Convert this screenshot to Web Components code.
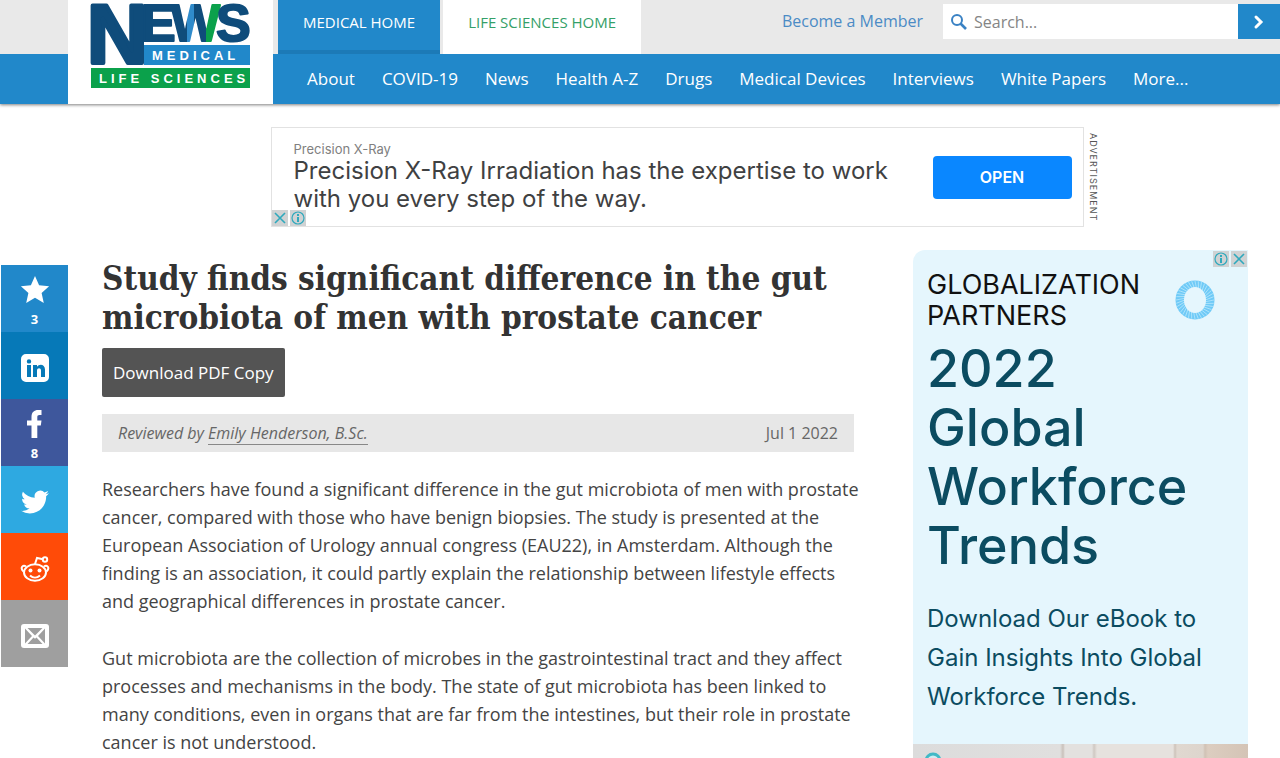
<!DOCTYPE html>
<html lang="en">
<head>
<meta charset="utf-8">
<meta name="viewport" content="width=device-width, initial-scale=1">
<title>Study finds significant difference in the gut microbiota of men with prostate cancer</title>
<style>
    body {
        margin: 0;
        background: #fff;
        color: #444;
        font-family: "Open Sans", "Noto Sans", sans-serif;
        font-size: 16px;
    }
</style>
</head>
<body>
<news-page>
    <site-header slot="header"></site-header>
    <banner-ad slot="banner" advertiser="Precision X-Ray" action="OPEN">Precision X-Ray Irradiation has the expertise to work with you every step of the way.</banner-ad>
    <share-rail slot="share"></share-rail>
    <news-article heading="Study finds significant difference in the gut microbiota of men with prostate cancer" reviewer="Emily Henderson, B.Sc." date="Jul 1 2022">
        <p>Researchers have found a significant difference in the gut microbiota of men with prostate cancer, compared with those who have benign biopsies. The study is presented at the European Association of Urology annual congress (EAU22), in Amsterdam. Although the finding is an association, it could partly explain the relationship between lifestyle effects and geographical differences in prostate cancer.</p>
        <p>Gut microbiota are the collection of microbes in the gastrointestinal tract and they affect processes and mechanisms in the body. The state of gut microbiota has been linked to many conditions, even in organs that are far from the intestines, but their role in prostate cancer is not understood.</p>
    </news-article>
    <sidebar-ad slot="aside"></sidebar-ad>
</news-page>

<script>
class NewsPage extends HTMLElement {
    constructor() {
        super();
        this.attachShadow({ mode: 'open' });
    }

    connectedCallback() {
        this.shadowRoot.innerHTML = `
            <style>
                :host {
                    display: flex;
                    flex-direction: column;
                    min-height: 100vh;
                }
                .banner {
                    display: flex;
                    justify-content: center;
                    padding: 23px 0 23px 88px;
                }
                .columns {
                    flex: 1;
                    display: grid;
                    grid-template-columns: 67px minmax(0, 1fr) 335px;
                    padding: 0 32px 0 1px;
                }
                .share {
                    padding-top: 15px;
                }
                main {
                    padding: 9px 59px 0 34px;
                }
                aside {
                    display: flex;
                }
            </style>
            <slot name="header"></slot>
            <div class="banner"><slot name="banner"></slot></div>
            <div class="columns">
                <div class="share"><slot name="share"></slot></div>
                <main><slot></slot></main>
                <aside><slot name="aside"></slot></aside>
            </div>
        `;
    }
}

class SiteLogo extends HTMLElement {
    constructor() {
        super();
        this.attachShadow({ mode: 'open' });
    }

    connectedCallback() {
        this.shadowRoot.innerHTML = `
            <style>
                :host {
                    display: block;
                    background: #fff;
                }
                a {
                    display: block;
                }
                svg {
                    display: block;
                    margin: 0 auto;
                }
                text {
                    font-family: "Liberation Sans", sans-serif;
                    font-weight: 700;
                }
                .small {
                    font-size: 13px;
                    fill: #fff;
                    letter-spacing: 4px;
                }
            </style>
            <a href="#" aria-label="News Medical Life Sciences">
                <svg width="161" height="90" viewBox="0 0 161 90">
                    <defs>
                        <linearGradient id="w" gradientUnits="userSpaceOnUse" x1="81" y1="20" x2="131" y2="20">
                            <stop offset="0.32" stop-color="#0f4c7b"/>
                            <stop offset="0.32" stop-color="#2f8bcb"/>
                            <stop offset="0.46" stop-color="#2f8bcb"/>
                            <stop offset="0.46" stop-color="#0f4c7b"/>
                            <stop offset="0.7" stop-color="#0f4c7b"/>
                            <stop offset="0.7" stop-color="#0ba14b"/>
                        </linearGradient>
                    </defs>
                    <g fill="#0f4c7b" stroke-width="2" stroke-linejoin="round">
                        <text x="-3" y="63" font-size="84" stroke="#0f4c7b" stroke-width="4">N</text>
                        <text x="51" y="41" font-size="52" stroke="#0f4c7b">E</text>
                        <text x="81" y="41" font-size="52" fill="url(#w)" stroke="url(#w)">W</text>
                        <text x="126" y="41" font-size="52" stroke="#0f4c7b">S</text>
                    </g>
                    <rect x="54" y="45" width="106" height="20" fill="#2188ca"/>
                    <rect x="1" y="68" width="159" height="20" fill="#0ba14b"/>
                    <text x="62" y="60" class="small">MEDICAL</text>
                    <text x="9" y="83" class="small">LIFE SCIENCES</text>
                </svg>
            </a>
        `;
    }
}

class SiteHeader extends HTMLElement {
    constructor() {
        super();
        this.attachShadow({ mode: 'open' });
    }

    connectedCallback() {
        const items = ['About', 'COVID-19', 'News', 'Health A-Z', 'Drugs', 'Medical Devices', 'Interviews', 'White Papers', 'More...'];

        this.shadowRoot.innerHTML = `
            <style>
                :host {
                    display: block;
                    box-shadow: 0 1px 3px rgba(0, 0, 0, 0.5);
                }
                header {
                    display: grid;
                    grid-template-columns: 68px 205px minmax(0, 1fr);
                    grid-template-rows: 54px 50px;
                    background: #e9e9e9;
                }
                site-logo {
                    grid-area: 1 / 2 / 3 / 3;
                }
                .edge {
                    grid-area: 2 / 1 / 3 / 2;
                    background: #2188ca;
                }
                .top {
                    grid-area: 1 / 3 / 2 / 4;
                    display: flex;
                }
                .tab {
                    display: flex;
                    align-items: center;
                    box-sizing: border-box;
                    padding: 0 25px 10px;
                    font-size: 15px;
                    text-decoration: none;
                }
                .medical {
                    margin: 0 3px 0 5px;
                    background: #2188ca;
                    border-bottom: 4px solid #1c7ab7;
                    padding-bottom: 6px;
                    color: #fff;
                }
                .life {
                    background: #fff;
                    color: #34a068;
                }
                .member {
                    margin: 0 20px 0 auto;
                    padding-bottom: 12px;
                    align-self: center;
                    color: #4b8bc5;
                    text-decoration: none;
                }
                form {
                    display: flex;
                    width: 337px;
                    margin: 4px 0 15px;
                }
                label {
                    flex: 1;
                    display: flex;
                    align-items: center;
                    gap: 6px;
                    padding-left: 7px;
                    background: #fff;
                }
                input {
                    flex: 1;
                    min-width: 0;
                    border: 0;
                    padding: 0;
                    outline: 0;
                    font: inherit;
                }
                input::placeholder {
                    color: #858585;
                }
                button {
                    display: flex;
                    align-items: center;
                    justify-content: center;
                    width: 42px;
                    padding: 0;
                    border: 0;
                    background: #2188ca;
                }
                nav {
                    grid-area: 2 / 3 / 3 / 4;
                    display: flex;
                    align-items: center;
                    gap: 27px;
                    padding: 0 34px 2px;
                    background: #2188ca;
                }
                nav a {
                    color: #fff;
                    font-size: 17px;
                    white-space: nowrap;
                    text-decoration: none;
                }
            </style>
            <header>
                <div class="edge"></div>
                <site-logo></site-logo>
                <div class="top">
                    <a class="tab medical" href="#">MEDICAL HOME</a>
                    <a class="tab life" href="#">LIFE SCIENCES HOME</a>
                    <a class="member" href="#">Become a Member</a>
                    <form role="search">
                        <label>
                            <svg width="18" height="18" viewBox="0 0 18 18" fill="none" stroke="#3a82c4" stroke-width="2" aria-hidden="true"><circle cx="7" cy="7" r="5"/><path d="M10.5 10.5 16 16" stroke-width="2.6"/></svg>
                            <input type="search" placeholder="Search..." aria-label="Search">
                        </label>
                        <button type="button" aria-label="Submit search">
                            <svg width="12" height="16" viewBox="0 0 12 16" fill="none" stroke="#fff" stroke-width="3"><path d="M3 3l5 5-5 5" stroke-linecap="round"/></svg>
                        </button>
                    </form>
                </div>
                <nav>${items.map(item => `<a href="#">${item}</a>`).join('')}</nav>
            </header>
        `;
    }
}

class AdMarks extends HTMLElement {
    constructor() {
        super();
        this.attachShadow({ mode: 'open' });
    }

    connectedCallback() {
        this.shadowRoot.innerHTML = `
            <style>
                :host {
                    display: flex;
                    gap: 2px;
                }
                :host([reverse]) {
                    flex-direction: row-reverse;
                }
                button {
                    width: 16px;
                    height: 16px;
                    padding: 0;
                    border: 0;
                    background: #cfd2d3;
                }
                svg {
                    display: block;
                    fill: none;
                    stroke: #2fa9bd;
                }
            </style>
            <button type="button" aria-label="Close ad"><svg width="16" height="16" viewBox="0 0 16 16" stroke-width="1.6"><path d="M3 3l10 10M13 3 3 13"/></svg></button>
            <button type="button" aria-label="Ad information"><svg width="16" height="16" viewBox="0 0 16 16" stroke-width="1.2"><circle cx="8" cy="8" r="6"/><path d="M8 7v5M8 4v2" stroke-width="2"/></svg></button>
        `;
    }
}

class BannerAd extends HTMLElement {
    constructor() {
        super();
        this.attachShadow({ mode: 'open' });
    }

    connectedCallback() {
        const advertiser = this.getAttribute('advertiser');
        const action = this.getAttribute('action');

        this.shadowRoot.innerHTML = `
            <style>
                :host {
                    display: flex;
                    gap: 4px;
                    font-family: Inter, "Liberation Sans", sans-serif;
                }
                .ad {
                    position: relative;
                    display: flex;
                    align-items: center;
                    justify-content: space-between;
                    box-sizing: border-box;
                    width: 813px;
                    min-height: 100px;
                    padding: 0 11px 0 22px;
                    border: 1px solid #e2e2e2;
                }
                .copy {
                    width: 610px;
                }
                .advertiser {
                    color: #808080;
                    font-size: 13px;
                    line-height: 16px;
                }
                .text {
                    color: #3f4142;
                    font-size: 24px;
                    line-height: 28px;
                }
                .open {
                    width: 139px;
                    height: 43px;
                    border: 0;
                    border-radius: 4px;
                    background: #0a87ff;
                    color: #fff;
                    font: 600 16px Inter, "Liberation Sans", sans-serif;
                }
                ad-marks {
                    position: absolute;
                    left: 0;
                    bottom: 0;
                }
                .label {
                    writing-mode: vertical-rl;
                    align-self: center;
                    color: #555;
                    font-size: 9px;
                    line-height: 10px;
                    letter-spacing: 1px;
                }
            </style>
            <div class="ad">
                <div class="copy">
                    <div class="advertiser">${advertiser}</div>
                    <div class="text"><slot></slot></div>
                </div>
                <button class="open" type="button">${action}</button>
                <ad-marks></ad-marks>
            </div>
            <div class="label">ADVERTISEMENT</div>
        `;
    }
}

class ShareButton extends HTMLElement {
    constructor() {
        super();
        this.attachShadow({ mode: 'open' });
    }

    connectedCallback() {
        const label = this.getAttribute('label');
        const count = this.getAttribute('count');
        const color = this.getAttribute('color');

        this.shadowRoot.innerHTML = `
            <style>
                :host {
                    display: block;
                }
                button {
                    display: flex;
                    flex-direction: column;
                    align-items: center;
                    justify-content: center;
                    gap: 7px;
                    width: 100%;
                    height: 67px;
                    padding: 4px 0 0;
                    border: 0;
                    background: ${color};
                    color: #fff;
                    font: 700 13px/14px "Open Sans", sans-serif;
                }
            </style>
            <button type="button" aria-label="${label}">
                <slot></slot>
                ${count ? `<span>${count}</span>` : ''}
            </button>
        `;
    }
}

class ShareRail extends HTMLElement {
    constructor() {
        super();
        this.attachShadow({ mode: 'open' });
    }

    connectedCallback() {
        this.shadowRoot.innerHTML = `
            <style>
                :host {
                    display: block;
                }
                svg {
                    display: block;
                    fill: #fff;
                }
            </style>
            <share-button label="Favourite" count="3" color="#2188ca">
                <svg width="30" height="30" viewBox="0 0 30 30"><path d="M15 1l4.100 9.300 10 1-7.500 6.700 2.200 10L15 22.800 6.200 28l2.200-10L.900 11.300l10-1z"/></svg>
            </share-button>
            <share-button label="LinkedIn" color="#0679b8">
                <svg width="30" height="30" viewBox="0 0 30 30"><path fill-rule="evenodd" d="M6 1h18a5 5 0 0 1 5 5v18a5 5 0 0 1-5 5H6a5 5 0 0 1-5-5V6a5 5 0 0 1 5-5zM7 12v12h4V12zM9 6.200a2.200 2.200 0 1 0 0 4.400 2.200 2.200 0 0 0 0-4.400zM13 12v12h4v-6.500c0-3 4-3.200 4 0V24h4v-7.500c0-5.500-5.800-6-8-2.800V12z"/></svg>
            </share-button>
            <share-button label="Facebook" count="8" color="#3e579c">
                <svg width="30" height="30" viewBox="0 0 30 30"><path d="M11.500 29V16.500H7v-5h4.500V8c0-5 2.800-7 6.600-7H21.500v5h-2c-1.700 0-2.200.8-2.200 2.300v3.200h4.200l-.7 5h-3.500V29z"/></svg>
            </share-button>
            <share-button label="Twitter" color="#2ea9e1">
                <svg width="28" height="28" viewBox="0 0 24 24"><path d="M23.950 4.570a10 10 0 0 1-2.820.77 4.960 4.960 0 0 0 2.160-2.720c-.95.550-2 .950-3.130 1.180a4.920 4.920 0 0 0-8.380 4.480A13.900 13.900 0 0 1 1.640 3.160a4.920 4.920 0 0 0 1.520 6.570 4.900 4.900 0 0 1-2.230-.61v.060a4.920 4.920 0 0 0 3.950 4.830 5 5 0 0 1-2.210.080 4.940 4.940 0 0 0 4.600 3.420A9.870 9.870 0 0 1 0 19.540a13.900 13.900 0 0 0 7.550 2.210c9.050 0 14-7.500 14-13.990l-.020-.640a9.900 9.900 0 0 0 2.420-2.550z"/></svg>
            </share-button>
            <share-button label="Reddit" color="#ff4b08">
                <svg width="30" height="28" viewBox="0 0 30 28"><g fill="none" stroke="#fff" stroke-width="2"><ellipse cx="15" cy="17.500" rx="11" ry="8.200"/><path d="M15 9l2-6 6 1.300M6 11.500c-3-2.200-6.400 1.300-2.500 5M24 11.500c3-2.200 6.400 1.300 2.500 5M10 20.500c3 2.800 7 2.800 10 0"/><circle cx="25" cy="4.500" r="2.200"/></g><circle cx="10.500" cy="15.500" r="2"/><circle cx="19.500" cy="15.500" r="2"/></svg>
            </share-button>
            <share-button label="Email" color="#9f9f9f">
                <svg width="30" height="26" viewBox="0 0 30 26"><rect x="1" y="1" width="28" height="24" rx="3"/><path fill="#9f9f9f" d="M5 5.500v15l7-7.500zM25 5.500v15l-7-7.500zM7.500 5h15L15 12.500zM7.500 21l6-6.500 1.500 1.200 1.500-1.200 6 6.500z"/></svg>
            </share-button>
        `;
    }
}

class NewsArticle extends HTMLElement {
    constructor() {
        super();
        this.attachShadow({ mode: 'open' });
    }

    connectedCallback() {
        const heading = this.getAttribute('heading');
        const reviewer = this.getAttribute('reviewer');
        const date = this.getAttribute('date');

        this.shadowRoot.innerHTML = `
            <style>
                :host {
                    display: block;
                }
                h1 {
                    margin: 0 0 11px;
                    color: #333;
                    font: 700 33px/39px "DejaVu Serif Condensed", "DejaVu Serif", serif;
                }
                .download {
                    height: 49px;
                    padding: 0 11px;
                    border: 0;
                    border-radius: 2px;
                    background: #545454;
                    color: #fff;
                    font: 400 17px "Open Sans", sans-serif;
                }
                .byline {
                    display: flex;
                    align-items: center;
                    justify-content: space-between;
                    height: 38px;
                    margin: 17px 0 23px;
                    padding: 0 16px;
                    background: #e7e7e7;
                    color: #666;
                    font-size: 16px;
                    line-height: 20px;
                }
                .byline a {
                    color: inherit;
                    text-decoration: none;
                    border-bottom: 1px solid #888;
                }
                ::slotted(p) {
                    margin: 0 -6px 29px 0;
                    font-size: 18px;
                    line-height: 28px;
                }
                ::slotted(p:last-child) {
                    margin-bottom: 0;
                }
            </style>
            <article>
                <h1>${heading}</h1>
                <button class="download" type="button">Download PDF Copy</button>
                <div class="byline">
                    <em>Reviewed by <a href="#">${reviewer}</a></em>
                    <time>${date}</time>
                </div>
                <slot></slot>
            </article>
        `;
    }
}

class SidebarAd extends HTMLElement {
    constructor() {
        super();
        this.attachShadow({ mode: 'open' });
    }

    connectedCallback() {
        // spokes of the ring logo
        let spokes = '';
        for (let i = 0; i < 36; i++) {
            spokes += `<path d="M20 1 22 11" transform="rotate(${i * 10} 20 20)"/>`;
        }

        this.shadowRoot.innerHTML = `
            <style>
                :host {
                    flex: 1;
                    position: relative;
                    display: flex;
                    flex-direction: column;
                    border-radius: 12px 0 0 0;
                    background: #e5f6fd;
                    color: #0b4c61;
                    font-family: Inter, "Liberation Sans", sans-serif;
                    overflow: hidden;
                }
                ad-marks {
                    position: absolute;
                    top: 1px;
                    right: 1px;
                }
                .brand {
                    display: flex;
                    justify-content: space-between;
                    align-items: center;
                    padding: 19px 33px 0 14px;
                    color: #111;
                    font-size: 27px;
                    line-height: 31px;
                }
                .brand span {
                    width: 240px;
                }
                h2 {
                    margin: 8px 14px 0;
                    font-size: 52px;
                    font-weight: 500;
                    line-height: 59px;
                }
                p {
                    margin: 24px 14px 28px;
                    font-size: 24px;
                    line-height: 39px;
                }
                .photo {
                    flex: 1;
                    min-height: 14px;
                    overflow: hidden;
                    background: linear-gradient(90deg, #dcdcdc, #e0dfde 147px, #c9c1bb 150px, #e3e1df 152px, #e3e1df 179px, #cfc8c2 181px, #e6e2de 184px, #e6e2de 260px, #cdc3ba 262px, #e0d8d0 264px, #ddd5cd 290px, #d0c2b5 292px, #dccdc0 295px, #d4c4b6);
                }
                .photo svg {
                    display: block;
                    height: 14px;
                    margin-left: 10px;
                }
            </style>
            <div class="brand">
                <span>GLOBALIZATION PARTNERS</span>
                <svg width="40" height="40" viewBox="0 0 40 40" fill="none" aria-hidden="true">
                    <circle cx="20" cy="20" r="19.500" fill="#6fcaf7"/>
                    <g stroke="#b5e6fb" stroke-width=".8">${spokes}</g>
                    <ellipse cx="20" cy="20" rx="11" ry="13" fill="#e5f6fd"/>
                </svg>
            </div>
            <h2>2022<br>Global<br>Workforce<br>Trends</h2>
            <p>Download Our eBook to Gain Insights Into Global Workforce Trends.</p>
            <div class="photo"><svg width="20" viewBox="0 0 20 14"><circle cx="10" cy="17" r="7" fill="#cdeef2" stroke="#41b9c6" stroke-width="3"/></svg></div>
            <ad-marks reverse></ad-marks>
        `;
    }
}

customElements.define('news-page', NewsPage);
customElements.define('site-logo', SiteLogo);
customElements.define('site-header', SiteHeader);
customElements.define('ad-marks', AdMarks);
customElements.define('banner-ad', BannerAd);
customElements.define('share-button', ShareButton);
customElements.define('share-rail', ShareRail);
customElements.define('news-article', NewsArticle);
customElements.define('sidebar-ad', SidebarAd);
</script>
</body>
</html>
